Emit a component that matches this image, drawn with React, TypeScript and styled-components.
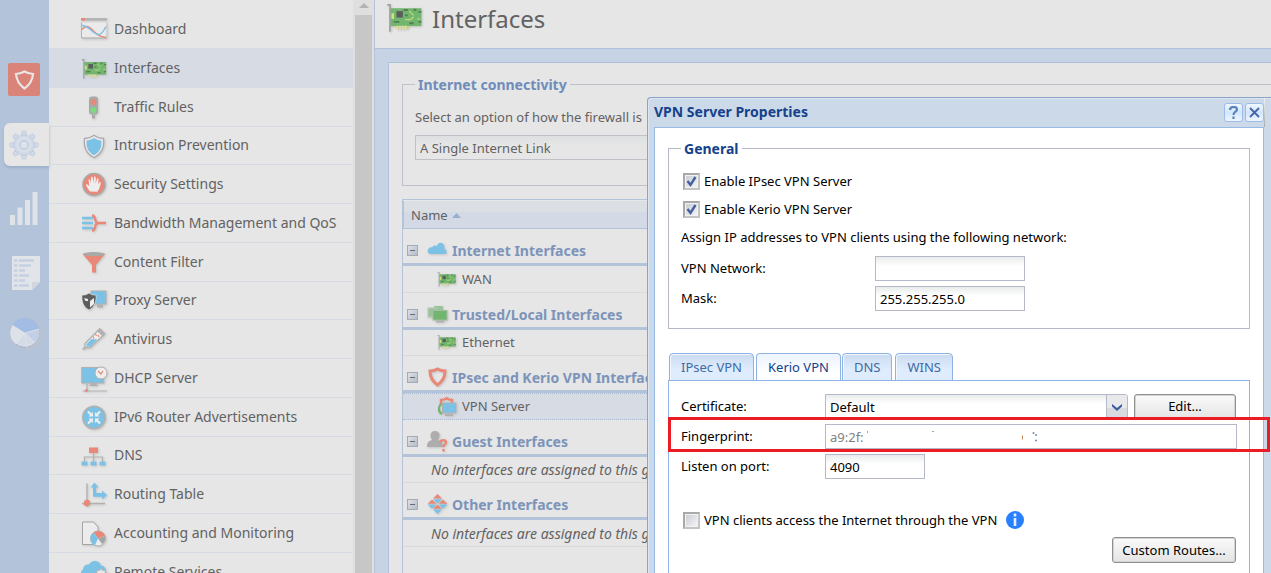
import React from "react";
import styled, { createGlobalStyle, css } from "styled-components";

const BLUE = "#7bc2e6";
const RED = "#e98879";
const GREY = "#b1b1b1";
const GREEN = "#72b56e";
const PAPER = "#e6e6e6";

const GlobalStyle = createGlobalStyle`
  *, *::before, *::after { box-sizing: border-box; }
  html, body, #root { height: 100%; }
  body {
    margin: 0;
    overflow: hidden;
    background: ${PAPER};
    color: #626262;
    font-family: "Noto Sans", "DejaVu Sans Condensed", sans-serif;
    font-size: 13px;
    line-height: 17px;
  }
  button, input, select { font: inherit; color: inherit; margin: 0; }
  svg { display: block; flex: none; }
`;

/* ---------- shell ---------- */

const Shell = styled.div`
  position: relative;
  display: flex;
  height: 100vh;
  overflow: hidden;
`;

const Rail = styled.nav`
  flex: none;
  display: flex;
  flex-direction: column;
  width: 49px;
  padding: 48px 0 0 4px;
  background: #b3c3da;
`;

const RailButton = styled.button<{ $active?: boolean }>`
  display: flex;
  align-items: center;
  justify-content: center;
  height: ${(p) => (p.$active ? 43 : 63)}px;
  margin: ${(p) => (p.$active ? "12px 0 9px" : "0")};
  padding: 0 5px 0 0;
  border: 0;
  border-radius: 6px 0 0 6px;
  background: ${(p) => (p.$active ? PAPER : "none")};
  box-shadow: ${(p) => (p.$active ? "0 2px 3px #9dafc9" : "none")};
`;

const Sidebar = styled.aside`
  flex: none;
  display: flex;
  width: 326px;
  border-right: 1px solid #b3c3da;
`;

const NavList = styled.ul`
  flex: 1;
  margin: 0;
  padding: 9px 0 0;
  list-style: none;
`;

const NavItem = styled.li<{ $active?: boolean }>`
  height: 39px;
  border-top: 1px solid #d5dae3;
  ${(p) => p.$active && css`background: #d6dbe4;`}
  &:first-child { border-top-color: transparent; }
  &:nth-child(4n) { height: 38px; }
`;

const NavLink = styled.a`
  display: flex;
  align-items: center;
  gap: 6px;
  height: 100%;
  padding: 0 0 2px 32px;
  color: #626262;
  font-size: 14px;
  text-decoration: none;
  white-space: nowrap;
  svg { margin-top: 4px; }
`;

const ScrollTrack = styled.div`
  flex: none;
  display: flex;
  flex-direction: column;
  align-items: center;
  width: 21px;
  padding-top: 3px;
  background: #dfdfdf;
`;

const ScrollThumb = styled.div`
  flex: 1;
  width: 17px;
  margin-top: 7px;
  background: #c7c7c7;
`;

/* ---------- main area ---------- */

const Main = styled.main`
  flex: 1;
  min-width: 0;
  display: flex;
  flex-direction: column;
  background: #c6d3e5;
`;

const PageHeader = styled.header`
  display: flex;
  align-items: center;
  gap: 8px;
  height: 49px;
  padding: 0 0 11px 11px;
  border-bottom: 1px solid #b0c1dc;
  background: ${PAPER};
`;

const PageTitle = styled.h1`
  margin: 0;
  font-size: 24px;
  line-height: 32px;
  font-weight: 400;
`;

const Panel = styled.section`
  flex: 1;
  display: flex;
  flex-direction: column;
  margin: 13px 0 0 13px;
  padding: 13px 0 0 13px;
  border: solid #b0c1dc;
  border-width: 1px 0 0 1px;
  background: ${PAPER};
`;

const Group = styled.fieldset<{ $muted?: boolean }>`
  margin: 0;
  min-width: 0;
  border: 1px solid ${(p) => (p.$muted ? "#bfc0c8" : "#b5b8c8")};
  ${(p) =>
    p.$muted
      ? css`padding: 16px 0 25px 12px; border-right: 0; margin-bottom: 13px;`
      : css`padding: 10px 12px 0; height: 189px;`}
`;

const GroupTitle = styled.legend<{ $muted?: boolean }>`
  padding: 0 3px;
  font-size: 14px;
  font-weight: 700;
  color: ${(p) => (p.$muted ? "#6f8cba" : "#15428b")};
`;

const Field = styled.label`
  display: block;
`;

const LinkSelect = styled.select`
  display: block;
  width: 480px;
  height: 25px;
  margin-top: 9px;
  padding: 1px 4px 0;
  appearance: none;
  border: 1px solid #bfc0c8;
  border-radius: 0;
  background: linear-gradient(#dde0e1, ${PAPER} 40%);
`;

const Grid = styled.table`
  width: 100%;
  flex: none;
  border-collapse: collapse;
  th, td { padding: 0; text-align: left; }
`;

const GridFrame = styled.div`
  flex: 1;
  border: solid #b3c3da;
  border-width: 1px 0 0 1px;
`;

const HeadCell = styled.div`
  display: flex;
  align-items: center;
  gap: 4px;
  height: 28px;
  margin-top: 1px;
  padding: 2px 0 0 7px;
  border: solid #b3c3da;
  border-width: 0 0 1px 1px;
  background: linear-gradient(#dbdfe4 0 40%, #d3dae6 41%);
  font-weight: 400;
`;

const GroupCell = styled.div`
  display: flex;
  align-items: center;
  gap: 4px;
  height: 37px;
  padding: 8px 0 0 4px;
  border-bottom: 3px solid #b3c3da;
  color: #7c94b9;
  font-size: 14px;
  font-weight: 700;
  white-space: nowrap;
  & > button { margin-right: 5px; }
`;

const Toggle = styled.button`
  width: 11px;
  height: 11px;
  padding: 0;
  border: 0;
  background: none;
`;

const ItemCell = styled.div<{ $short?: boolean; $selected?: boolean; $empty?: boolean }>`
  display: flex;
  align-items: center;
  gap: 5px;
  height: ${(p) => (p.$short ? 26 : 27)}px;
  padding-left: ${(p) => (p.$empty ? 28 : 34)}px;
  ${(p) => p.$empty && css`font-size: 14px; font-style: italic;`}
  border-bottom: 1px solid #dadada;
  ${(p) =>
    p.$selected &&
    css`
      background: #d6dbe4;
      border-top: 1px dotted #a9bad3;
      border-bottom: 1px dotted #a9bad3;
    `}
  white-space: nowrap;
`;

/* ---------- dialog ---------- */

const Dialog = styled.section`
  position: absolute;
  top: 97px;
  right: 0;
  bottom: 0;
  display: flex;
  flex-direction: column;
  width: 624px;
  padding: 0 7px 0 6px;
  border: solid #8ba3c7;
  border-width: 1px 0 0 1px;
  border-radius: 4px 0 0 0;
  box-shadow: inset 1px 1px 0 #dce6f2;
  background: #ccd9e9;
  color: #000;
`;

const DialogHeader = styled.header`
  display: flex;
  align-items: center;
  gap: 2px;
  height: 29px;
  &::after {
    content: "";
    position: absolute;
    top: 0;
    right: 6px;
    width: 1px;
    height: 29px;
    background: linear-gradient(#f4f4f4, #a9a9a9);
  }
`;

const DialogTitle = styled.h2`
  flex: 1;
  margin: 0;
  padding-bottom: 2px;
  font-size: 14px;
  font-weight: 700;
  color: #15428b;
`;

const ToolButton = styled.button`
  display: flex;
  align-items: center;
  justify-content: center;
  width: 19px;
  height: 19px;
  padding: 0;
  border: 1px solid #9dbce9;
  border-radius: 3px;
  background: linear-gradient(#f0f7ff, #d3e6fb 50%, #eef6ff);
  color: #416aa3;
  font-weight: 700;
`;

const DialogBody = styled.div`
  flex: 1;
  display: flex;
  flex-direction: column;
  padding: 12px 13px 0;
  border: solid #99b9e6;
  border-width: 1px 1px 0;
  background: #fff;
`;

const CheckRow = styled.label`
  display: flex;
  align-items: center;
  gap: 4px;
  height: 28px;
  margin-left: 2px;
`;

const Check = styled.input`
  appearance: none;
  flex: none;
  width: 17px;
  height: 17px;
  border: 2px solid #a9a9a9;
  border-right-color: #c4c4c4;
  border-bottom-color: #c4c4c4;
  background: linear-gradient(135deg, #c6cad3, #f6f6f6);
  box-shadow: inset 0 0 0 1px #f2f2f2;
`;

const CheckBox = styled.span`
  position: relative;
  display: flex;
  svg { position: absolute; inset: 0; pointer-events: none; }
`;

const Hint = styled.p`
  display: flex;
  align-items: center;
  height: 28px;
  margin: 0;
`;

const FormRow = styled.div<{ $wide?: boolean }>`
  display: flex;
  align-items: center;
  gap: 6px;
  height: 25px;
  margin-top: 5px;
  & > label { flex: none; width: ${(p) => (p.$wide ? 188 : 138)}px; }
`;

const TextInput = styled.input<{ $width?: number }>`
  ${(p) => (p.$width ? css`width: ${p.$width}px;` : css`flex: 1; min-width: 0;`)}
  height: 25px;
  padding: 0 4px;
  border: 1px solid #b5b8c8;
  border-radius: 0;
  background: linear-gradient(#e9ecec, #fff 40%);
  &:disabled { color: #808080; background: #fff; }
`;

const TabBar = styled.div`
  display: flex;
  gap: 3px;
  height: 28px;
  margin: 24px 0 -1px;
  padding-left: 1px;
`;

const Tab = styled.button<{ $active?: boolean }>`
  height: 28px;
  margin: ${(p) => (p.$active ? "0 -2px 0 -1px" : "0")};
  padding: 0 11px;
  border: 1px solid #8db2e3;
  border-bottom: ${(p) => (p.$active ? "0" : "1px solid #8db2e3")};
  border-radius: 4px 4px 0 0;
  background: ${(p) =>
    p.$active ? "linear-gradient(#eaf3ff, #fff 70%)" : "linear-gradient(#cbdbef, #deecfd 60%)"};
  box-shadow: inset 1px 1px 0 #f2f8ff;
  color: ${(p) => (p.$active ? "#15428b" : "#416aa3")};
  white-space: nowrap;
`;

const TabPanel = styled.div`
  flex: 1;
  padding: 13px 12px 0 12px;
  border: solid #8db2e3;
  border-width: 1px 1px 0;
  & > div:first-child { margin-top: 0; }
`;

const SelectBox = styled.div`
  position: relative;
  flex: 1;
  svg { position: absolute; top: 1px; right: 0; pointer-events: none; }
`;

const CertSelect = styled.select`
  display: block;
  width: 100%;
  height: 25px;
  padding: 1px 4px 0;
  appearance: none;
  border: 1px solid #b5b8c8;
  border-radius: 0 3px 0 0;
  background: linear-gradient(#e9ecec, #fff 40%);
`;

const PushButton = styled.button<{ $width: number }>`
  width: ${(p) => p.$width}px;
  height: 26px;
  margin-right: 1px;
  padding: 0;
  border: 1px solid #8f8f8f;
  border-radius: 3px;
  box-shadow: inset 0 0 0 1px #d4d4d4;
  background: linear-gradient(#fafafa, #e4e4e4);
`;

const Redacted = styled.div`
  position: relative;
  flex: 1;
  display: flex;
  svg { position: absolute; top: 6px; left: 40px; pointer-events: none; }
`;

const HighlightedRow = styled.div`
  position: relative;
  margin-top: 5px;
  & > div { margin-top: 0; }
  &::after {
    content: "";
    position: absolute;
    inset: -7px -33px -3px -13px;
    border: 3px solid #ec1c24;
    pointer-events: none;
  }
`;

const AccessRow = styled(CheckRow)`
  height: 28px;
  margin: 27px 0 0 2px;
  svg:last-child { margin-left: 5px; }
`;

const Actions = styled.div`
  display: flex;
  justify-content: flex-end;
  margin-top: 3px;
`;

/* ---------- drawings ---------- */

const Drawing = styled.svg`
  filter: drop-shadow(1px 1px 1px #c4c4c4);
`;

const Card = ({ size }: { size: number }) => (
  <Drawing width={size} height={(size * 3) / 4} viewBox="0 0 26 20">
    <path d="M.5.5h2v19" fill="none" stroke="#a3a3a3" strokeWidth="1.3" />
    <rect x="3" y="3" width="21.500" height="12.500" fill={GREEN} />
    <path d="M3 15.500h3l1 2h8l1-2z" fill="#cfd27a" />
    <path d="M7.500 15v3M9.500 15v3M11.500 15v3M13.500 15v3" stroke={PAPER} strokeWidth=".6" />
    <rect x="7" y="5" width="4.500" height="4.500" fill="#5c5c5c" />
    <path d="M3.500 6.500h1.800v4H3.500z" fill="#cfe37b" />
    <path d="M13 11h4l2-2M16 5l3 3M21.500 10.500h2" fill="none" stroke="#bddb74" strokeWidth=".9" />
    <path d="M12 4.200h3M19 4h2M22.500 5.500h2M22.500 12.500h2M16 13.500h3M13 8h2M5 12.500h4" fill="none" stroke="#557f51" strokeWidth="1.300" />
  </Drawing>
);

const navIcons: Record<string, React.ReactNode> = {
  Dashboard: (
    <>
      <path d="M.5 5v15.500h25V5" fill="#eaeaea" stroke="#cfcfcf" />
      <path d="M.5 5v15.500H26" fill="none" stroke={GREY} />
      <path d="M0 1.800h26" stroke={GREY} strokeWidth="2.400" />
      <path d="M0 1.800h4" stroke={RED} strokeWidth="2.400" />
      <path d="M1 12c5-6 8-2 12 2s6 5 12 6" fill="none" stroke={RED} strokeWidth="1.400" />
      <path d="M1 8c5 0 8 4 12 7s7 4 12-6" fill="none" stroke={BLUE} strokeWidth="1.400" />
    </>
  ),
  "Traffic Rules": (
    <>
      <rect x="8" y="1" width="9" height="18" rx="3" fill="#a9a9a9" />
      <path d="M11 19h3v4h-3z" fill="#a9a9a9" />
      <circle cx="12.500" cy="6.500" r="3" fill={RED} />
      <circle cx="12.500" cy="14.500" r="3" fill="#77de7b" />
    </>
  ),
  "Intrusion Prevention": (
    <>
      <path d="M13 .8c3 2.400 6 3 9.500 3 1 8-1 15-9.500 19.200C4.500 19 2.500 12 3.500 3.800 7 3.800 10 3.200 13 .8z" fill="#e8e8e8" stroke="#a9a9a9" strokeWidth="1.200" />
      <path d="M13 3.400c2.500 1.700 4.500 2.300 7.300 2.500.6 6-1 11.300-7.300 14.800C6.700 17.200 5.100 12 5.700 5.900 8.500 5.700 10.500 5.100 13 3.400z" fill={BLUE} />
    </>
  ),
  "Security Settings": (
    <>
      <circle cx="13" cy="12" r="11" fill={RED} stroke="#a9a9a9" strokeWidth="1.600" />
      <path d="M9 19c-1.500-2-3.500-4.500-4-7 1.500-.6 2.500.8 3.200 2L7.600 7c1-.8 1.900 0 2.200 4l.4-6.500c1.200-.8 2 0 2 6.500l1-6.800c1.300-.6 2 .3 1.400 7l1.600-5.400c1.200-.3 1.900.6.8 6.200l1.700-2.600c1.300 0 1.300 1.200.8 2.600-1 3.500-1.500 5.500-3.300 7.200z" fill="#eee" />
    </>
  ),
  "Bandwidth Management and QoS": (
    <>
      <path d="M1 6.500h11M1 11.500h11M1 16.500h11" stroke={BLUE} strokeWidth="2.600" />
      <path d="M11 4c3 0 3 3 3.500 5 .5 2 2 2.500 3 2.500-1 0-2.500.5-3 2.500S14 19 11 19M16 11.500h9" fill="none" stroke={RED} strokeWidth="2.400" />
    </>
  ),
  "Content Filter": (
    <>
      <path d="M1.500 3.500L11 14.500V22h4v-7.500L24 3.500z" fill={RED} />
      <ellipse cx="12.800" cy="3.600" rx="11.300" ry="2" fill="#a9a9a9" />
    </>
  ),
  "Proxy Server": (
    <>
      <rect x="10" y="1.500" width="15" height="13" fill={BLUE} stroke={GREY} />
      <path d="M16 15h6v3h-6z" fill={GREY} />
      <path d="M1 5.500c3 .3 5-.5 7-2 2 1.500 4 2.300 7 2 .5 7-1.500 12-7 15-5.500-3-7.500-8-7-15z" fill="#5d5d5d" stroke="#eee" strokeWidth=".6" />
      <path d="M3 8.500l4 1v2H4.500zM9 11.500l4-3v6l-4 3.500z" fill="#eee" />
    </>
  ),
  Antivirus: (
    <>
      <path d="M2 22l4-4" stroke={GREY} strokeWidth="2" />
      <path d="M4 16L17 3l5 5L9 20H4z" fill="#eee" stroke={GREY} strokeWidth="1.300" />
      <path d="M5.500 16.500l5-5 6 .5-7.300 7H5.500z" fill={BLUE} />
      <path d="M16.500 2.500l6 6M18 1l6 6" stroke={GREY} strokeWidth="2" />
      <path d="M12 9l1 2M14.500 6.500l1 2M17 7.500l1 2" stroke={RED} strokeWidth="1.200" />
    </>
  ),
  "DHCP Server": (
    <>
      <rect x=".8" y="1" width="22" height="15.500" fill={BLUE} stroke={GREY} />
      <path d="M10 17h5v1.500h-5zM8 19h9M6 17.500v7M1.500 24.500H26" fill={GREY} stroke={GREY} strokeWidth="1.200" />
      <circle cx="5.500" cy="24" r="1.400" fill={RED} />
      <circle cx="20" cy="6.500" r="6" fill="#eee" stroke={GREY} />
      <path d="M17 4.500l3 3 2-3" fill="none" stroke={RED} strokeWidth="1.300" />
    </>
  ),
  "IPv6 Router Advertisements": (
    <>
      <circle cx="13" cy="12" r="11.200" fill={BLUE} stroke={GREY} strokeWidth="1.600" />
      <path d="M7 6l4 4M19 6l-4 4M7 18l4-4M19 18l-4-4" stroke="#eee" strokeWidth="2.200" />
      <path d="M12 6.500V11H7.500zM14 6.500V11h4.500zM12 17.500V13H7.500zM14 17.500V13h4.500z" fill="#eee" />
    </>
  ),
  DNS: (
    <>
      <path d="M12.500 8v10M3.500 18v-5.500h18V18" fill="none" stroke={GREY} strokeWidth="1.200" />
      <rect x="8" y="3" width="9" height="5.500" fill={RED} />
      <path d="M.5 17h6v4h-6zM9.500 17h6v4h-6zM18.500 17h6v4h-6z" fill={BLUE} />
    </>
  ),
  "Routing Table": (
    <>
      <path d="M6 1v20H24M1 21h5v3" fill="none" stroke={GREY} strokeWidth="1.400" />
      <circle cx="6" cy="20.500" r="3.200" fill={RED} />
      <path d="M13.500 0l4 5h-2.500v5.500h6V8l5 4.500-5 4.500v-2.800h-9V5H9.500z" fill={BLUE} />
    </>
  ),
  "Accounting and Monitoring": (
    <>
      <path d="M1.500.5h11l4.500 5V23h-15.500z" fill="#ececec" stroke="#a5a5a5" />
      <circle cx="17" cy="17" r="7.500" fill="#eee" stroke={GREY} />
      <path d="M17 17L12.500 11A7.500 7.500 0 0 1 24 14.500z" fill={RED} />
      <path d="M17 17L12.500 11A7.500 7.500 0 0 0 14 23.800z" fill={BLUE} />
      <path d="M17 17L24 14.500a7.500 7.500 0 0 1-3 8z" fill="#a5a5a5" />
    </>
  ),
  "Remote Services": (
    <>
      <path d="M3 18a5 5 0 0 1-1-9 5 5 0 0 1 6-5 6.500 6.500 0 0 1 12 1 5 5 0 0 1 4 8 4 4 0 0 1-3 5z" fill={BLUE} />
      <circle cx="20" cy="14" r="5" fill="#e8e8e8" stroke={GREY} strokeDasharray="2 2" strokeWidth="2" />
    </>
  ),
};

const NavIcon = ({ name }: { name: string }) =>
  name === "Interfaces" ? (
    <Card size={27} />
  ) : (
    <Drawing width="27" height="26" viewBox="0 0 27 25">{navIcons[name]}</Drawing>
  );

const CloudIcon = () => (
  <Drawing width="21" height="20" viewBox="0 0 21 20">
    <path d="M3 14a3 3 0 0 1-1.500-5C2 7.500 4 7 5 7.500 6 5 9 5 10 6c1-4 6-4.500 7-.5 1 1.500 0 2.500.5 3.500 2 .5 3 3.500 1 5z" fill={BLUE} />
  </Drawing>
);

const LocalIcon = () => (
  <Drawing width="21" height="20" viewBox="0 0 21 20">
    <rect x="7" y="2" width="9" height="8" fill="#9bc39a" />
    <rect x="1" y="4" width="9" height="9" fill="#9bc39a" stroke="#b8c9b8" />
    <rect x="6" y="6.500" width="14" height="9.500" fill={GREEN} stroke="#a5bba5" />
    <path d="M9 17.500h8" stroke={GREY} strokeWidth="2" />
  </Drawing>
);

const ShieldIcon = () => (
  <Drawing width="21" height="20" viewBox="0 0 21 20">
    <path d="M10.500 2c2.500 1.500 4.500 2 7.500 2 0 6-2.500 10.500-7.500 14C5.500 14.500 3 10 3 4c3 0 5-.5 7.500-2z" fill="none" stroke={RED} strokeWidth="3" />
  </Drawing>
);

const GuestIcon = () => (
  <Drawing width="21" height="21" viewBox="0 0 21 21">
    <path d="M8 0c3 0 4.500 2 4.500 4.500 0 2-1 3-1.500 4.500 3 1 5 2 5 7H0c0-5 2-6 5-7C4.500 7.500 3.500 6.500 3.500 4.500 3.500 2 5 0 8 0z" fill="#adadad" />
    <path d="M13.500 11.500c0-3 5.500-3 5.500 0 0 2-2.500 2-2.500 4.500M16.500 18v2.500" fill="none" stroke={RED} strokeWidth="2.400" />
  </Drawing>
);

const OtherIcon = () => (
  <Drawing width="21" height="20" viewBox="0 0 21 20">
    <path d="M10.500 0l4.500 4.500H6zM5 5.500l4.500 4.200H.5zM16 5.500l4.500 4.200h-9zM10.500 10.500l4.500 4.200H6z" fill={RED} />
    <path d="M6 5.200h9l-4.500 4.300zM.5 10.400h9L5 14.700zM11.500 10.400h9L16 14.700zM6 15.400h9L10.500 20z" fill={BLUE} />
  </Drawing>
);

const VpnIcon = () => (
  <Drawing width="20" height="20" viewBox="0 0 20 20">
    <path d="M4 8V3c2 0 4-.5 5.500-2C11 2.500 13 3 15 3v4" fill="none" stroke={RED} strokeWidth="2.400" />
    <path d="M4 7c-3 3-3 8 1 10" fill="none" stroke={GREEN} strokeWidth="2.200" />
    <rect x="5.500" y="6" width="13.500" height="10" fill={BLUE} stroke={GREY} />
    <path d="M8 18h8" stroke={GREY} strokeWidth="2" />
  </Drawing>
);

const MinusIcon = () => (
  <svg width="11" height="11" viewBox="0 0 11 11">
    <defs>
      <linearGradient id="toggleFill" x1="0" y1="0" x2="1" y2="1">
        <stop offset="0" stopColor="#e0e2e6" />
        <stop offset="1" stopColor="#b4bac6" />
      </linearGradient>
    </defs>
    <rect x=".5" y=".5" width="10" height="10" fill="url(#toggleFill)" stroke="#a1abba" />
    <path d="M3 5.500h5" stroke="#626b7b" />
  </svg>
);

/* ---------- content ---------- */

const sections = [
  { title: "Internet Interfaces", icon: <CloudIcon />, item: "WAN" },
  { title: "Trusted/Local Interfaces", icon: <LocalIcon />, item: "Ethernet" },
  { title: "IPsec and Kerio VPN Interfaces", icon: <ShieldIcon />, item: "VPN Server", vpn: true },
  { title: "Guest Interfaces", icon: <GuestIcon /> },
  { title: "Other Interfaces", icon: <OtherIcon /> },
];

const navNames = [
  "Dashboard", "Interfaces", "Traffic Rules", "Intrusion Prevention", "Security Settings",
  "Bandwidth Management and QoS", "Content Filter", "Proxy Server", "Antivirus", "DHCP Server",
  "IPv6 Router Advertisements", "DNS", "Routing Table", "Accounting and Monitoring", "Remote Services",
];

const Tick = ({ id, checked, label, children }: { id: string; checked?: boolean; label: string; children?: React.ReactNode }) => (
  <>
    <CheckBox>
      <Check id={id} type="checkbox" defaultChecked={checked} />
      {checked && (
        <svg width="17" height="17" viewBox="0 0 17 17">
          <path d="M4.500 8l3 4L12.500 4" fill="none" stroke="#4660a0" strokeWidth="2.400" />
        </svg>
      )}
    </CheckBox>
    <span>{label}</span>
    {children}
  </>
);

export default function App() {
  return (
    <Shell>
      <GlobalStyle />
      <Rail aria-label="Sections">
        <RailButton aria-label="Home">
          <svg width="32" height="33" viewBox="0 0 32 33">
            <rect width="32" height="33" rx="2" fill="#da8379" />
            <path d="M16.500 8.500c2.500 1.500 5 2 8.500 2.500-.5 6-3 10.500-8.500 14.500C11 21.500 8.500 17 8 11c3.500-.5 6-1 8.500-2.500z" fill="none" stroke="#ebe6e6" strokeWidth="2.200" />
          </svg>
        </RailButton>
        <RailButton $active aria-label="Configuration">
          <svg width="32" height="30" viewBox="-1 0 32 30">
            <g fill="#d3dbe8" stroke="#c3cfe2">
              {[0, 45, 90, 135, 180, 225, 270, 315].map((a) => (
                <path key={a} d="M12.500 5l.8-4h3.400l.8 4z" transform={`rotate(${a} 15 15)`} />
              ))}
              <circle cx="15" cy="15" r="10" />
            </g>
            <circle cx="15" cy="15" r="6.500" fill="none" stroke="#e1e4e9" />
            <circle cx="15" cy="15" r="4" fill="#dfe3e9" stroke="#c0cde1" strokeWidth="1.500" />
          </svg>
        </RailButton>
        <RailButton aria-label="Status">
          <svg width="30" height="38" viewBox="0 0 30 38">
            <path d="M1 27h5v10H1zM8.500 19.500h5V37h-5zM16 12h5v25h-5zM23.500 4h5v33h-5z" fill="#dfe2e7" />
          </svg>
        </RailButton>
        <RailButton aria-label="Logs">
          <svg width="32" height="40" viewBox="-4 -6 32 40">
            <path d="M0 0h28v26l-8 8H0z" fill="#e1e4e8" />
            <path d="M20 34v-8h8z" fill="#d2d7df" />
            <path d="M2 4.500h3.500M2 9.500h3.500M2 14.500h3.500M2 19.500h3.500M2 24.500h3.500M2 29.500h3.500M7 4.500h15M7 9.500h12M7 14.500h6M7 19.500h10M7 24.500h6M7 29.500h10" stroke="#c5d0e2" strokeWidth="2.600" />
          </svg>
        </RailButton>
        <RailButton aria-label="User status">
          <Drawing width="32" height="34" viewBox="-1 -2 32 34">
            <circle cx="16" cy="15" r="14.500" fill="#d5dbe6" stroke="#9fb0ca" />
            <path d="M16 15L3.500 7A14.500 14.500 0 0 1 30 11z" fill="#a3bce3" />
            <path d="M16 15l14-4a14.500 14.500 0 0 1-4 14z" fill="#c3cfe4" />
            <path d="M16 15L3.500 7a14.500 14.500 0 0 0 3 19z" fill="#dde1e8" />
            <path d="M16 15l14-4M16 15l10 10M16 15l2 14.500M16 15L7 26" stroke="#dfe4ed" strokeWidth=".8" />
          </Drawing>
        </RailButton>
      </Rail>

      <Sidebar>
        <NavList>
          {navNames.map((name) => (
            <NavItem key={name} $active={name === "Interfaces"}>
              <NavLink href="#">
                <NavIcon name={name} />
                {name}
              </NavLink>
            </NavItem>
          ))}
        </NavList>
        <ScrollTrack>
          <svg width="10" height="5" viewBox="0 0 10 5"><path d="M0 5l5-5 5 5z" fill="#b3b3b3" /></svg>
          <ScrollThumb />
        </ScrollTrack>
      </Sidebar>

      <Main>
        <PageHeader>
          <Card size={38} />
          <PageTitle>Interfaces</PageTitle>
        </PageHeader>
        <Panel>
          <Group $muted>
            <GroupTitle $muted>Internet connectivity</GroupTitle>
            <Field>
              Select an option of how the firewall is
              <LinkSelect><option>A Single Internet Link</option></LinkSelect>
            </Field>
          </Group>
          <GridFrame>
            <Grid>
              <thead>
                <tr>
                  <th>
                    <HeadCell>
                      Name
                      <svg width="9" height="5" viewBox="0 0 9 5"><path d="M0 5l4.500-5L9 5z" fill="#9aaed0" /></svg>
                    </HeadCell>
                  </th>
                </tr>
              </thead>
              <tbody>
                {sections.map((s, i) => (
                  <React.Fragment key={s.title}>
                    <tr>
                      <td>
                        <GroupCell>
                          <Toggle aria-label={`Collapse ${s.title}`}><MinusIcon /></Toggle>
                          {s.icon}
                          {s.title}
                        </GroupCell>
                      </td>
                    </tr>
                    <tr>
                      <td>
                        <ItemCell $short={i % 2 === 1} $selected={s.vpn} $empty={!s.item}>
                          {s.item && (s.vpn ? <VpnIcon /> : <Card size={20} />)}
                          {s.item || "No interfaces are assigned to this group"}
                        </ItemCell>
                      </td>
                    </tr>
                  </React.Fragment>
                ))}
              </tbody>
            </Grid>
          </GridFrame>
        </Panel>
      </Main>

      <Dialog role="dialog" aria-labelledby="dialog-title">
        <DialogHeader>
          <DialogTitle id="dialog-title">VPN Server Properties</DialogTitle>
          <ToolButton aria-label="Help">
            <svg width="11" height="13" viewBox="0 0 11 13">
              <path d="M2 4c0-4 7-4 7-.5C9 6 5.500 5.500 5.500 9M5.500 10.500V13" fill="none" stroke="#5a83b8" strokeWidth="2.200" />
            </svg>
          </ToolButton>
          <ToolButton aria-label="Close">
            <svg width="11" height="11" viewBox="0 0 11 11">
              <path d="M1 1l9 9M10 1l-9 9" stroke="#4665a5" strokeWidth="1.800" />
            </svg>
          </ToolButton>
        </DialogHeader>
        <DialogBody>
          <Group>
            <GroupTitle>General</GroupTitle>
            <CheckRow><Tick id="ipsec" checked label="Enable IPsec VPN Server" /></CheckRow>
            <CheckRow><Tick id="kerio" checked label="Enable Kerio VPN Server" /></CheckRow>
            <Hint>Assign IP addresses to VPN clients using the following network:</Hint>
            <FormRow $wide>
              <label htmlFor="network">VPN Network:</label>
              <TextInput id="network" $width={150} />
            </FormRow>
            <FormRow $wide>
              <label htmlFor="mask">Mask:</label>
              <TextInput id="mask" $width={150} defaultValue="255.255.255.0" />
            </FormRow>
          </Group>

          <TabBar role="tablist">
            <Tab role="tab">IPsec VPN</Tab>
            <Tab role="tab" $active aria-selected>Kerio VPN</Tab>
            <Tab role="tab">DNS</Tab>
            <Tab role="tab">WINS</Tab>
          </TabBar>
          <TabPanel role="tabpanel">
            <FormRow>
              <label htmlFor="cert">Certificate:</label>
              <SelectBox>
                <CertSelect id="cert"><option>Default</option></CertSelect>
                <svg width="22" height="24" viewBox="0 0 22 24">
                  <path d="M1 0h18q2 0 2 2v22H1z" fill="#e9e9ec" />
                  <path d="M1 13h20v11H1z" fill="#d9dae0" />
                  <path d="M.5 0v24M21.500 2v22" stroke="#b5b8c8" />
                  <path d="M6 9l5 4 5-4v2.500l-5 4.500-5-4.500z" fill="#3c5c9e" />
                </svg>
              </SelectBox>
              <PushButton $width={102}>Edit...</PushButton>
            </FormRow>
            <HighlightedRow>
              <FormRow>
                <label htmlFor="print">Fingerprint:</label>
                <Redacted>
                  <TextInput id="print" disabled defaultValue="a9:2f:" />
                  <svg width="180" height="14" viewBox="0 0 180 14">
                    <path d="M2.500 1v2M67 1.500h2" stroke="#9aa" />
                    <path d="M157.500 5.500v4" stroke="#c98a5c" />
                    <path d="M168.500 2v2M170 5h2M170 10.500h2" stroke="#7391b5" strokeWidth="1.500" />
                  </svg>
                </Redacted>
              </FormRow>
            </HighlightedRow>
            <FormRow>
              <label htmlFor="port">Listen on port:</label>
              <TextInput id="port" $width={100} defaultValue="4090" />
            </FormRow>
            <AccessRow>
              <Tick id="access" label="VPN clients access the Internet through the VPN">
                <svg width="18" height="18" viewBox="0 0 18 18">
                  <circle cx="9" cy="9" r="9" fill="#2a7fff" />
                  <path d="M9 2.500v3M9 7v8" stroke="#e4eefc" strokeWidth="2.600" />
                </svg>
              </Tick>
            </AccessRow>
            <Actions><PushButton $width={124}>Custom Routes...</PushButton></Actions>
          </TabPanel>
        </DialogBody>
      </Dialog>
    </Shell>
  );
}
